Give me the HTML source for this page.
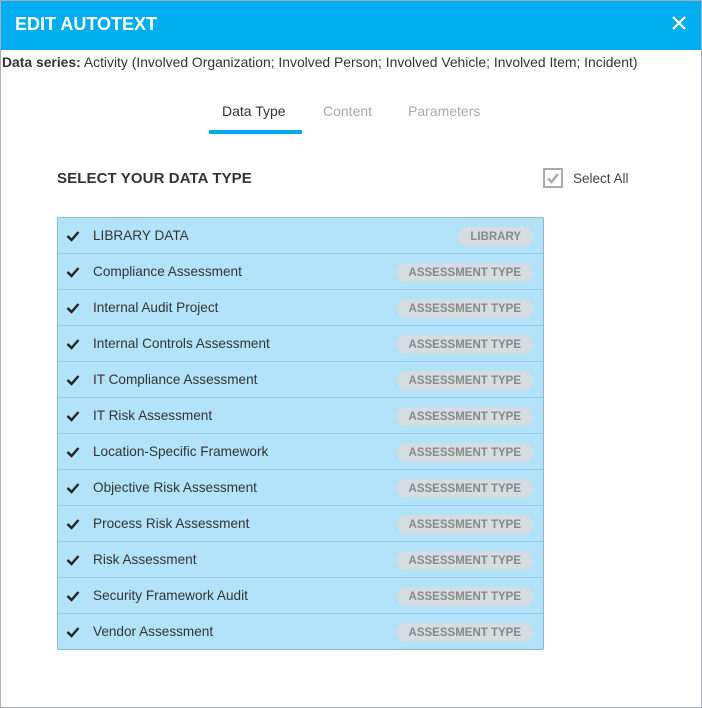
<!DOCTYPE html>
<html><head><style>
*{margin:0;padding:0;box-sizing:border-box}
body{width:702px;height:708px;background:#fff;font-family:"Liberation Sans",sans-serif;position:relative;overflow:hidden;}
.frame{position:absolute;left:0;top:0;width:702px;height:708px;border:1px solid #aab;}
.hdr{position:absolute;left:0;top:0;width:702px;height:50px;background:#00adee;}
.hdr .t{position:absolute;left:15px;top:14px;color:#fff;font-weight:bold;font-size:18px;}
.hdr svg{position:absolute;left:671px;top:15px}
.ds{position:absolute;left:2px;top:54px;font-size:13.9px;color:#333}
.tab{position:absolute;top:103px;font-size:14px;color:#aaa}
.ul{position:absolute;left:209px;top:130px;width:93px;height:4px;background:#00adee}
.h{position:absolute;left:57px;top:170px;font-size:15px;color:#333;font-weight:bold;letter-spacing:0.1px}
.cb{position:absolute;left:543px;top:168px;width:20px;height:20px;border:2px solid #aaa;}
.sa{position:absolute;left:573px;top:171px;font-size:13.5px;color:#444}
.list{position:absolute;left:57px;top:217px;width:487px;height:433px;border:1px solid #8fb9cc;border-radius:2px;background:#b3e3f8}
.row{height:36px;border-bottom:1px solid #98cbe2;position:relative;font-size:13.6px;color:#333}
.row:last-child{border-bottom:none}
.row .c{position:absolute;left:8px;top:11px}
.row .n{position:absolute;left:35px;top:10px}
.row .b{position:absolute;right:10px;top:9px;height:19px;line-height:20px;padding:0 12px;border-radius:10px;background:#d5dde0;color:#888;font-size:11.5px;font-weight:bold}
</style></head><body>
<div class="hdr"><div class="t">EDIT AUTOTEXT</div>
<svg width="16" height="16"><path d="M2 2L14 14M14 2L2 14" stroke="#fff" stroke-width="2.2"/></svg></div>
<div class="frame"></div>
<div class="ds"><b>Data series:</b> Activity (Involved Organization; Involved Person; Involved Vehicle; Involved Item; Incident)</div>
<div class="tab" style="left:222px;color:#333">Data Type</div>
<div class="tab" style="left:323px">Content</div>
<div class="tab" style="left:408px">Parameters</div>
<div class="ul"></div>
<div class="h">SELECT YOUR DATA TYPE</div>
<div class="cb"><svg width="16" height="16" style="position:absolute;left:0;top:0"><path d="M3 8.5L6.5 12L13 4" stroke="#aaa" stroke-width="2.5" fill="none"/></svg></div>
<div class="sa">Select All</div>
<div class="list">
<div class="row"><svg class="c" width="14" height="14"><path d="M1.5 7L5.5 11L12.5 3" stroke="#222" stroke-width="2.4" fill="none"/></svg><span class="n">LIBRARY DATA</span><span class="b">LIBRARY</span></div>
<div class="row"><svg class="c" width="14" height="14"><path d="M1.5 7L5.5 11L12.5 3" stroke="#222" stroke-width="2.4" fill="none"/></svg><span class="n">Compliance Assessment</span><span class="b">ASSESSMENT TYPE</span></div>
<div class="row"><svg class="c" width="14" height="14"><path d="M1.5 7L5.5 11L12.5 3" stroke="#222" stroke-width="2.4" fill="none"/></svg><span class="n">Internal Audit Project</span><span class="b">ASSESSMENT TYPE</span></div>
<div class="row"><svg class="c" width="14" height="14"><path d="M1.5 7L5.5 11L12.5 3" stroke="#222" stroke-width="2.4" fill="none"/></svg><span class="n">Internal Controls Assessment</span><span class="b">ASSESSMENT TYPE</span></div>
<div class="row"><svg class="c" width="14" height="14"><path d="M1.5 7L5.5 11L12.5 3" stroke="#222" stroke-width="2.4" fill="none"/></svg><span class="n">IT Compliance Assessment</span><span class="b">ASSESSMENT TYPE</span></div>
<div class="row"><svg class="c" width="14" height="14"><path d="M1.5 7L5.5 11L12.5 3" stroke="#222" stroke-width="2.4" fill="none"/></svg><span class="n">IT Risk Assessment</span><span class="b">ASSESSMENT TYPE</span></div>
<div class="row"><svg class="c" width="14" height="14"><path d="M1.5 7L5.5 11L12.5 3" stroke="#222" stroke-width="2.4" fill="none"/></svg><span class="n">Location-Specific Framework</span><span class="b">ASSESSMENT TYPE</span></div>
<div class="row"><svg class="c" width="14" height="14"><path d="M1.5 7L5.5 11L12.5 3" stroke="#222" stroke-width="2.4" fill="none"/></svg><span class="n">Objective Risk Assessment</span><span class="b">ASSESSMENT TYPE</span></div>
<div class="row"><svg class="c" width="14" height="14"><path d="M1.5 7L5.5 11L12.5 3" stroke="#222" stroke-width="2.4" fill="none"/></svg><span class="n">Process Risk Assessment</span><span class="b">ASSESSMENT TYPE</span></div>
<div class="row"><svg class="c" width="14" height="14"><path d="M1.5 7L5.5 11L12.5 3" stroke="#222" stroke-width="2.4" fill="none"/></svg><span class="n">Risk Assessment</span><span class="b">ASSESSMENT TYPE</span></div>
<div class="row"><svg class="c" width="14" height="14"><path d="M1.5 7L5.5 11L12.5 3" stroke="#222" stroke-width="2.4" fill="none"/></svg><span class="n">Security Framework Audit</span><span class="b">ASSESSMENT TYPE</span></div>
<div class="row"><svg class="c" width="14" height="14"><path d="M1.5 7L5.5 11L12.5 3" stroke="#222" stroke-width="2.4" fill="none"/></svg><span class="n">Vendor Assessment</span><span class="b">ASSESSMENT TYPE</span></div>
</div>
</body></html>
